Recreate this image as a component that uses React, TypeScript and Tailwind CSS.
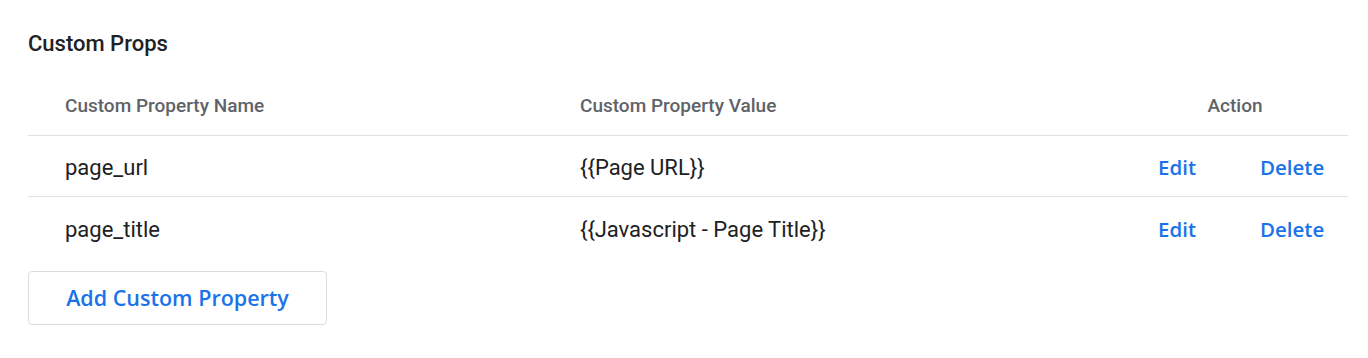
const rows = [
  { name: "page_url", value: "{{Page URL}}" },
  { name: "page_title", value: "{{Javascript - Page Title}}" },
];

export default function App() {
  return (
    <div className="w-[1368px] h-[358px] bg-white font-['Roboto',sans-serif] text-[#202124]">
      <div className="pl-[28px] pr-[20px] pt-[30px]">
        <h2 className="text-[22px] font-medium leading-[28px]">Custom Props</h2>

        <div className="mt-[16px]">
          <div className="flex items-center h-[62px] pt-[3px] border-b border-[#e0e0e0] text-[19px] font-medium text-[#5f6368]">
            <div className="w-[552px] pl-[37px]">Custom Property Name</div>
            <div className="flex-1">Custom Property Value</div>
            <div className="w-[226px] text-center">Action</div>
          </div>
          {rows.map((r, i) => (
            <div
              key={r.name}
              className={`flex items-center h-[61px] pt-[3px] text-[22px] ${i < rows.length - 1 ? "border-b border-[#e0e0e0]" : ""}`}
            >
              <div className="w-[552px] pl-[37px]">{r.name}</div>
              <div className="flex-1">{r.value}</div>
              <div className="w-[226px] flex text-[#1a73e8] font-['Open_Sans',sans-serif] font-semibold text-[20.5px]">
                <button className="ml-[36px] w-[102px] text-left">Edit</button>
                <button>Delete</button>
              </div>
            </div>
          ))}
        </div>

        <button className="mt-[13px] w-[299px] h-[54px] border border-[#dadce0] rounded-[4px] font-['Open_Sans',sans-serif] text-[21.5px] font-semibold text-[#1a73e8]">
          Add Custom Property
        </button>
      </div>
    </div>
  );
}
